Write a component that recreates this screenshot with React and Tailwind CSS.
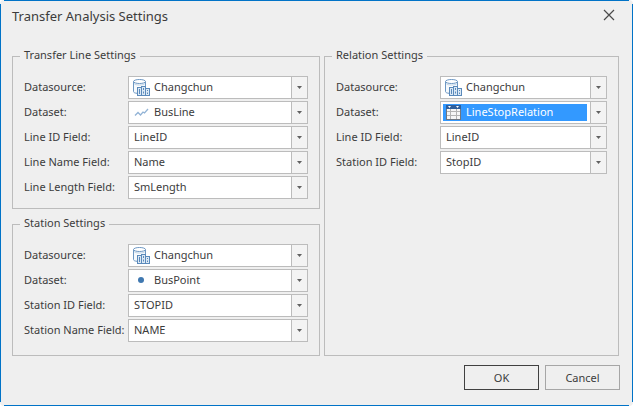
import React, { useId } from "react";

function DatasourceIcon() {
  return (
    <svg width="17" height="17" viewBox="0 0 17 17" fill="none" aria-hidden="true">
      <path d="M.5 2.5V13c0 1 1.400 1.600 3.500 1.800V8h8.500V2.500z" fill="#f6fafd" />
      <path d="M.5 2.500V12.500c0 1 1.300 1.600 3.500 1.800M12.500 2.500V7" stroke="#6d97c3" />
      <ellipse cx="6.500" cy="2.500" rx="6" ry="2" fill="#fff" stroke="#6d97c3" />
      <path d="M1 4.500c1 1 3 1.500 5.500 1.500s4.500-.5 5.500-1.500" stroke="#c3d6e8" />
      <rect x="4" y="7" width="13" height="10" fill="#fff" />
      <rect x="4.500" y="8.500" width="4" height="8" fill="#dce9f5" stroke="#5b8abb" />
      <rect x="8.500" y="7.500" width="4" height="9" fill="#dce9f5" stroke="#5b8abb" />
      <rect x="12.500" y="9.500" width="4" height="7" fill="#dce9f5" stroke="#5b8abb" />
      <path d="M6.500 10v5M10.500 9v2M10.500 12.500v2M14.500 11v1M14.500 13.500v1.500" stroke="#5b8abb" />
    </svg>
  );
}

function LineIcon() {
  return (
    <svg width="17" height="17" viewBox="0 0 17 17" fill="none" aria-hidden="true">
      <path d="M2 11.500 5 8.500l2.500 2.500L10 8l1.500 1L15 5" stroke="#93b4d6" strokeWidth="1.300" />
    </svg>
  );
}

function PointIcon() {
  return (
    <svg width="17" height="17" viewBox="0 0 17 17" aria-hidden="true">
      <circle cx="8" cy="8" r="3" fill="#3f78b0" />
    </svg>
  );
}

function TableIcon() {
  return (
    <svg width="17" height="17" viewBox="0 0 17 17" aria-hidden="true">
      <path d="M1 1h15v15H1z" fill="#6f7680" />
      <path d="M1 1h15v4H1z" fill="#2f5f9c" />
      <path d="M3 2h3L4.500 4zM11 2h3l-1.500 2z" fill="#fff" />
      <path d="M2 5h13v10H2z" fill="#b4b4b4" />
      <path d="M2 5h3v2H2zM6 5h5v2H6zM12 5h3v2h-3zM2 8h3v3H2zM6 8h5v3H6zM12 8h3v3h-3zM2 12h3v3H2zM6 12h5v3H6zM12 12h3v3h-3z" fill="#f6f6f6" />
    </svg>
  );
}

function Field({ label, value, icon, selected }) {
  const id = useId();
  return (
    <div className="flex items-center">
      <label htmlFor={id} className="w-[104px] shrink-0 pb-0.5 whitespace-nowrap">
        {label}
      </label>
      <div className="relative flex h-[23px] min-w-0 flex-1 border border-[#bcbcbc] bg-white">
        <select
          id={id}
          defaultValue={value}
          className={`my-0.5 mr-[19px] ml-0.5 min-w-0 flex-1 appearance-none pb-0.5 outline-none ${icon ? "pl-[23px]" : "pl-[3px]"} ${selected ? "bg-[#3399ff] text-white" : "bg-white"}`}
        >
          <option>{value}</option>
        </select>
        {icon && <span className="pointer-events-none absolute top-0.5 left-1">{icon}</span>}
        <span className="pointer-events-none absolute inset-y-0 right-0 flex w-4 items-center justify-center border-l border-[#bcbcbc] bg-[#f3f3f3]">
          <svg width="5" height="3" viewBox="0 0 5 3" aria-hidden="true">
            <path d="M0 0h5L2.500 3z" fill="#606060" />
          </svg>
        </span>
      </div>
    </div>
  );
}

function Group({ title, className = "", children }) {
  return (
    <fieldset className={`min-w-0 border border-[#bcbcbc] px-[11px] pt-3 pb-[9px] ${className}`}>
      <legend className="-ml-1 pr-1 pb-0.5 pl-1 leading-[14px]">{title}</legend>
      <div className="flex flex-col gap-0.5">{children}</div>
    </fieldset>
  );
}

function Corner({ place, curve }) {
  return (
    <span className={`absolute size-1 bg-white ${place}`}>
      <span className={`block size-full bg-[#efefef] ${curve}`} />
    </span>
  );
}

export default function App() {
  return (
    <main className="relative flex min-h-screen flex-col border border-[#0173c7] bg-[#efefef] pr-3 pb-[15px] pl-[11px] font-['Noto_Sans','Open_Sans',sans-serif] text-[11px] leading-4 text-[#3c3c3c]">
      <Corner place="-top-px -left-px" curve="rounded-tl-full" />
      <Corner place="-top-px -right-px" curve="rounded-tr-full" />
      <Corner place="-bottom-px -left-px" curve="rounded-bl-full" />
      <Corner place="-right-px -bottom-px" curve="rounded-br-full" />

      <header className="flex h-[47px] items-start justify-between pt-1 pr-px">
        <h1 className="text-[13px] leading-[22px]">Transfer Analysis Settings</h1>
        <button type="button" aria-label="Close" className="flex size-5 items-center justify-center">
          <svg width="12" height="12" viewBox="0 0 12 12" fill="none" aria-hidden="true">
            <path d="M1 1l10 10M11 1L1 11" stroke="#4a4a4a" strokeWidth="1.200" />
          </svg>
        </button>
      </header>

      <div className="grid flex-1 grid-cols-[308fr_295fr] gap-1 pr-px">
        <div className="flex min-w-0 flex-col gap-[7px]">
          <Group title="Transfer Line Settings">
            <Field label="Datasource:" value="Changchun" icon={<DatasourceIcon />} />
            <Field label="Dataset:" value="BusLine" icon={<LineIcon />} />
            <Field label="Line ID Field:" value="LineID" />
            <Field label="Line Name Field:" value="Name" />
            <Field label="Line Length Field:" value="SmLength" />
          </Group>
          <Group title="Station Settings" className="flex-1">
            <Field label="Datasource:" value="Changchun" icon={<DatasourceIcon />} />
            <Field label="Dataset:" value="BusPoint" icon={<PointIcon />} />
            <Field label="Station ID Field:" value="STOPID" />
            <Field label="Station Name Field:" value="NAME" />
          </Group>
        </div>
        <Group title="Relation Settings">
          <Field label="Datasource:" value="Changchun" icon={<DatasourceIcon />} />
          <Field label="Dataset:" value="LineStopRelation" icon={<TableIcon />} selected />
          <Field label="Line ID Field:" value="LineID" />
          <Field label="Station ID Field:" value="StopID" />
        </Group>
      </div>

      <footer className="mt-[9px] flex justify-end gap-1.5">
        <button type="button" className="h-[25px] w-[75px] border border-[#404040]">
          OK
        </button>
        <button type="button" className="h-[25px] w-[75px] border border-[#a6a6a6]">
          Cancel
        </button>
      </footer>
    </main>
  );
}
